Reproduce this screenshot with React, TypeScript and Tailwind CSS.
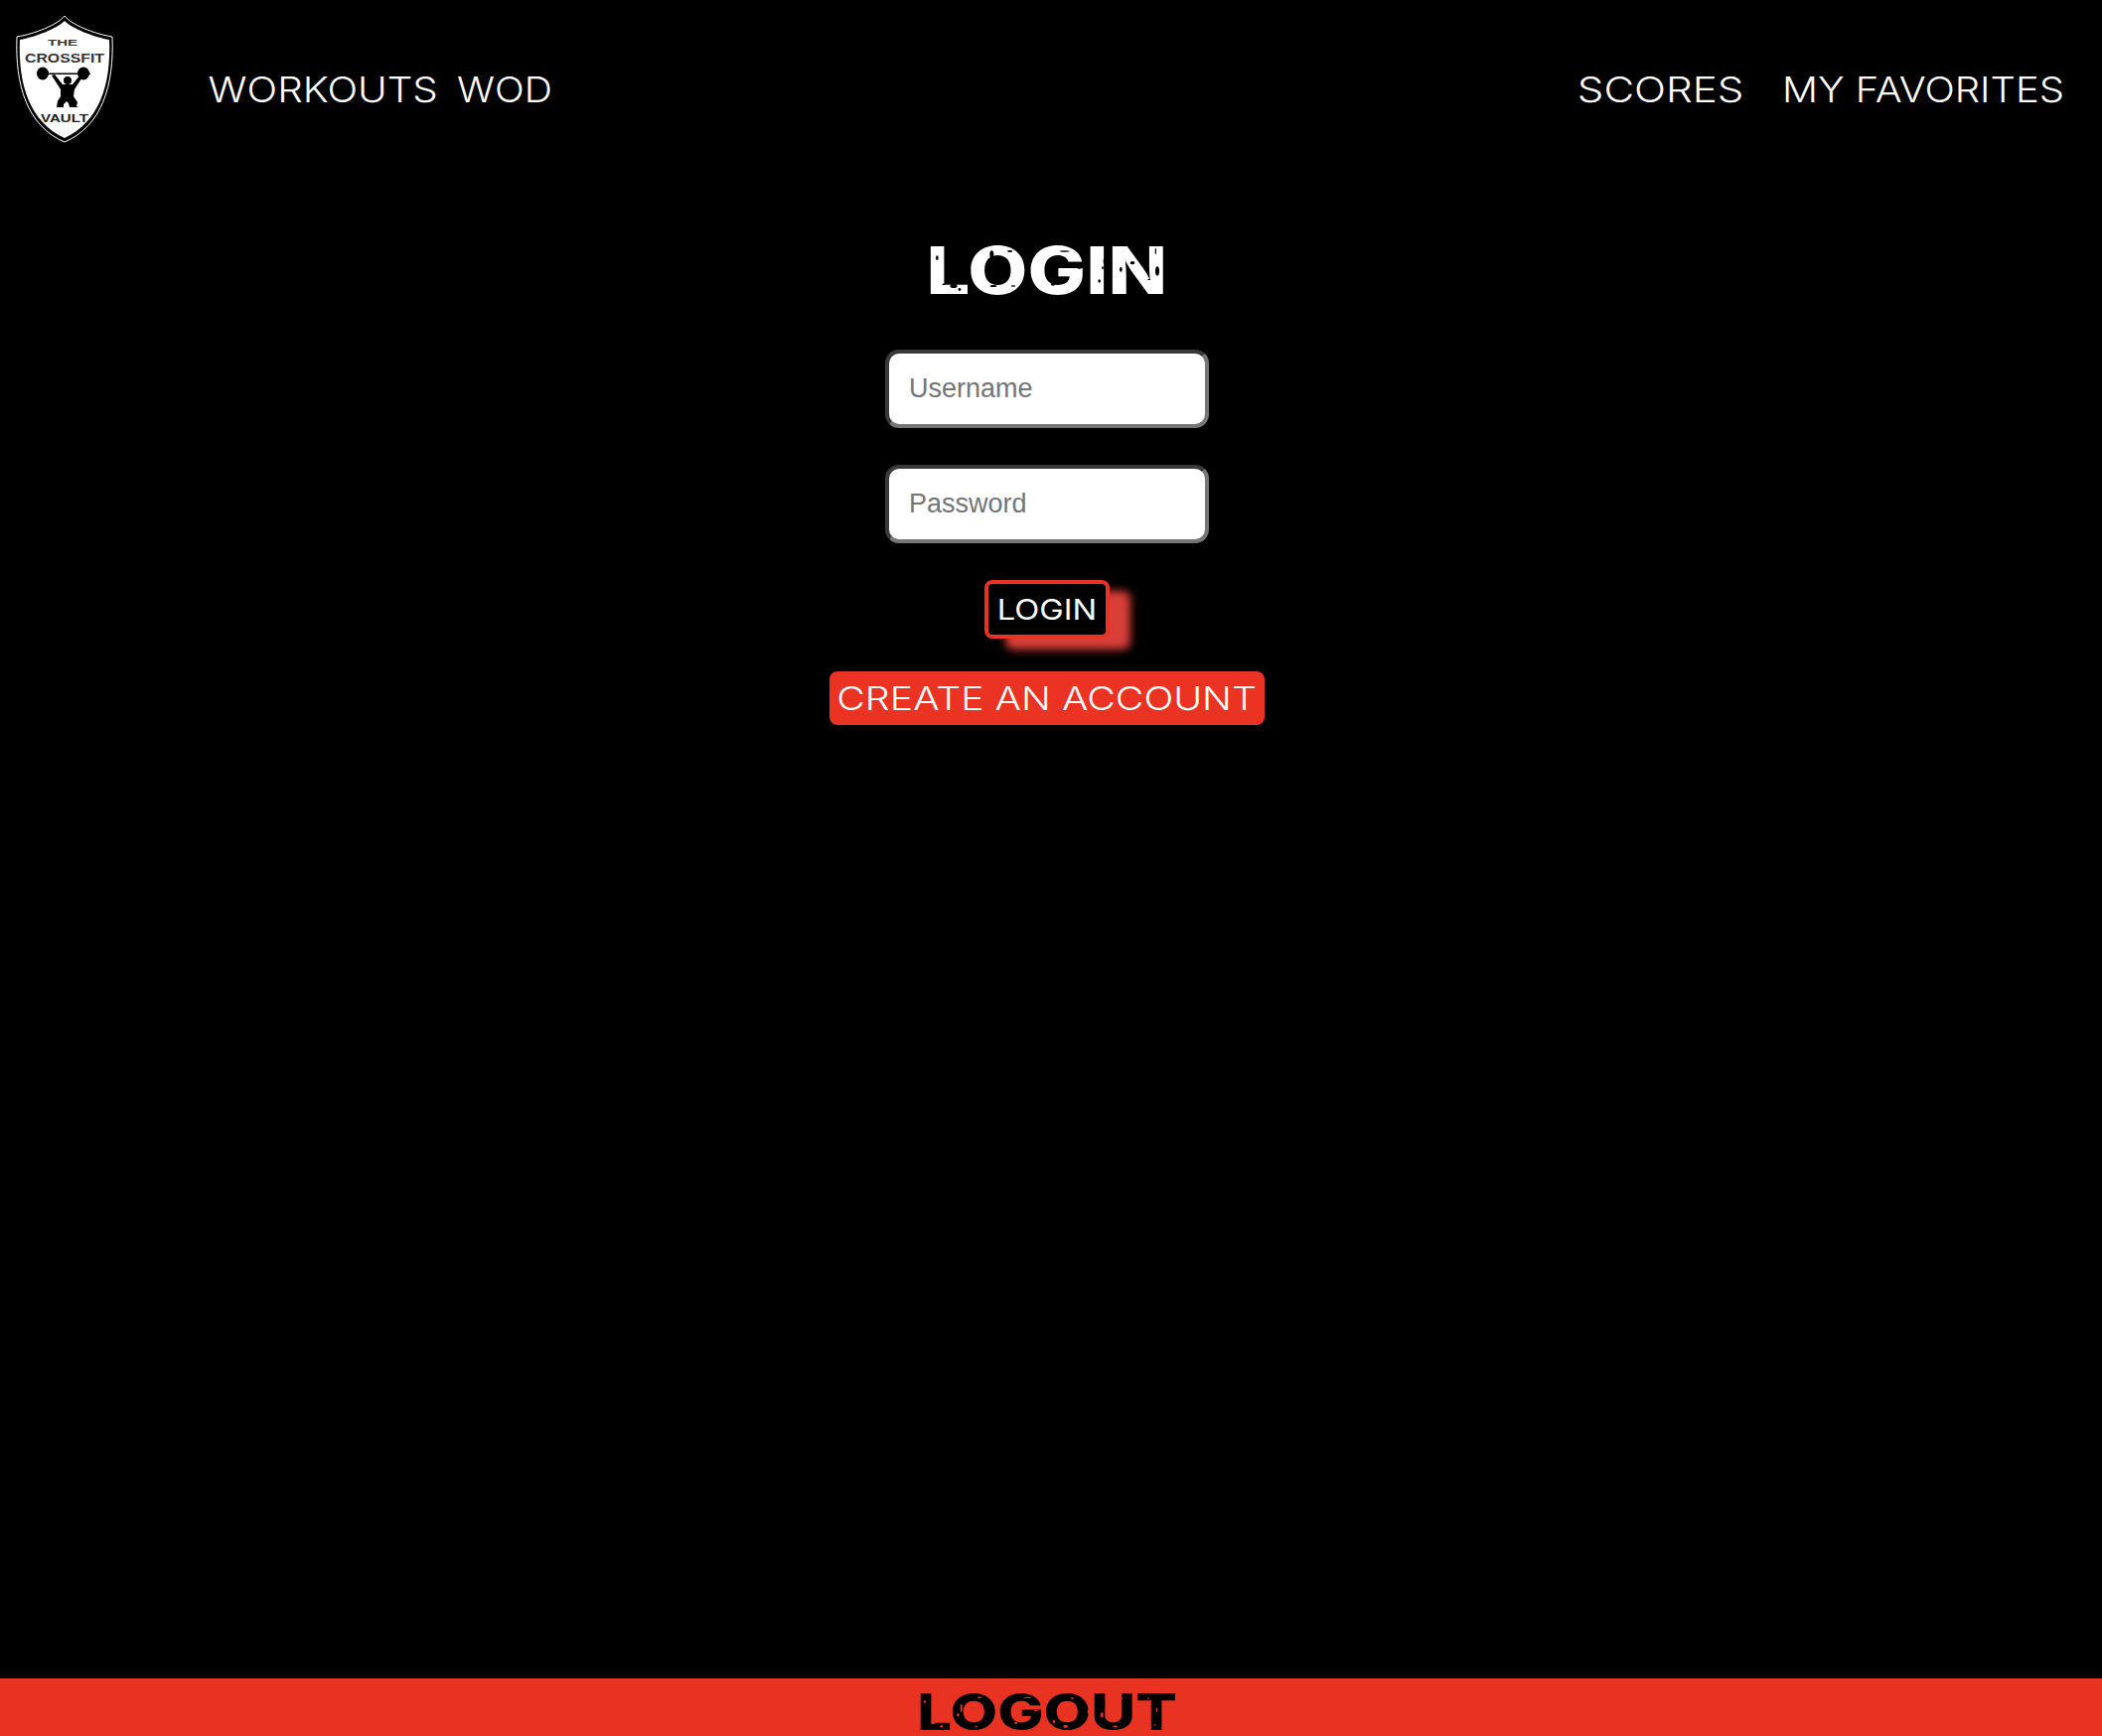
import React from "react";

function NavLink({ label, width, scale }: { label: string; width: string; scale: string }) {
  return (
    <a className={`${width} flex justify-center whitespace-nowrap text-white text-[36px] leading-[40px] font-[260] [font-family:'Inter',sans-serif]`}>
      <span className={`inline-block ${scale}`}>{label}</span>
    </a>
  );
}

function Logo() {
  return (
    <svg viewBox="0 0 130 150" className="w-[130px] h-[150px] shrink-0 self-start">
      <path d="M65 16 C72 25 95 34 113 37 C115 85 103 127 65 143 C27 127 15 85 17 37 C35 34 58 25 65 16 Z" fill="#000" stroke="#fff" strokeWidth="1" />
      <path d="M65 21 C73 29 94 37 110 40 C112 85 100 123 65 139 C30 123 18 85 20 40 C36 37 57 29 65 21 Z" fill="#fff" />
      <text x="48" y="46" fontSize="9.5" fontWeight="700" textLength="30" lengthAdjust="spacingAndGlyphs" fontFamily="Liberation Sans, sans-serif" fill="#333">THE</text>
      <text x="25" y="63" fontSize="12" fontWeight="700" textLength="80" lengthAdjust="spacingAndGlyphs" fontFamily="Liberation Sans, sans-serif" fill="#333">CROSSFIT</text>
      <text x="41" y="123" fontSize="11.5" fontWeight="700" textLength="48" lengthAdjust="spacingAndGlyphs" fontFamily="Liberation Sans, sans-serif" fill="#222">VAULT</text>
      <rect x="37" y="73.5" width="54" height="1.5" fill="#000" />
      <ellipse cx="43" cy="74" rx="6" ry="6.5" fill="#000" />
      <ellipse cx="84" cy="74" rx="6" ry="6.5" fill="#000" />
      <circle cx="68" cy="81" r="4" fill="#000" />
      <path d="M52 76 L55 75 L63 85 L73 85 L81 75 L84 76 L75 90 L74 97 L78 103 L77 107 L79 108 L70 108 L69 104 L67 102 L64 105 L64 108 L57 108 L58 102 L61 97 L61 90 Z" fill="#000" />
    </svg>
  );
}

type Sp = [number, number, number, number];
const loginSpecks: Sp[] = [
  [370,120,8,14],[420,205,22,12],[390,200,10,5],[438,215,8,10],[535,110,12,24],[520,150,8,30],[590,100,16,6],[540,205,20,6],[600,205,14,4],[755,100,30,5],[800,150,14,6],[720,200,14,8],[810,190,6,8],[875,130,6,20],[860,190,8,10],[870,150,5,10],[925,155,8,16],[960,135,14,10],[1035,160,12,28],[1010,185,10,4],[1030,100,4,20],
];
const logoutSpecks: Sp[] = [
  [155,130,6,10],[180,195,14,6],[205,205,8,8],[320,118,14,5],[265,150,6,25],[255,170,8,10],[310,205,10,4],[465,118,24,4],[490,158,12,4],[430,195,10,6],[600,120,12,5],[650,160,8,16],[545,190,8,10],[580,205,14,10],[690,170,8,16],[730,205,16,5],[750,120,6,4],[855,155,4,14],[830,120,6,4],[850,200,4,6],
];

function Specks({ items, ox, oy, color, w, h }: { items: Sp[]; ox: number; oy: number; color: string; w: number; h: number }) {
  return (
    <svg viewBox={`0 0 ${w} ${h}`} className="absolute inset-0 w-full h-full" aria-hidden="true">
      {items.map(([x, y, a, b], i) => (
        <ellipse key={i} cx={(x - ox) / 3} cy={(y - oy) / 3} rx={a / 6} ry={b / 6} fill={color} />
      ))}
    </svg>
  );
}

export default function App() {
  return (
    <div className="h-screen bg-black flex flex-col overflow-hidden">
      <header className="flex items-center h-[180px] pr-[39px]">
        <Logo />
        <nav className="flex items-center ml-[80px] gap-[21px]">
          <NavLink label="WORKOUTS" width="w-[230px]" scale="scale-x-[1.12]" />
          <NavLink label="WOD" width="w-[94px]" scale="scale-x-[1.09]" />
        </nav>
        <nav className="flex items-center ml-auto gap-[40px]">
          <NavLink label="SCORES" width="w-[166px]" scale="scale-x-[1.17]" />
          <NavLink label="MY FAVORITES" width="w-[282px]" scale="scale-x-[1.11]" />
        </nav>
      </header>

      <main className="flex flex-col items-center pr-[8px] pt-[68px]">
        <h1 className="relative w-[236px] h-[48px] flex justify-center items-center whitespace-nowrap text-white text-[66px] leading-[48px] font-extrabold [font-family:'Inter',sans-serif]">
          <span className="inline-block scale-x-[1.18]">LOGIN</span>
          <Specks items={loginSpecks} ox={348} oy={85} color="#000" w={236} h={48} />
        </h1>
        <input
          placeholder="Username"
          className="mt-[56px] w-[326px] h-[79px] box-border bg-white rounded-[14px] border-4 border-t-[#3a3a3a] border-l-[#3a3a3a] border-r-[#767676] border-b-[#767676] pl-[20px] pb-[1px] text-[27px] text-black placeholder:text-[#757575] [font-family:'Liberation_Sans',sans-serif]"
        />
        <input
          placeholder="Password"
          className="mt-[37px] w-[326px] h-[79px] box-border bg-white rounded-[14px] border-4 border-t-[#3a3a3a] border-l-[#3a3a3a] border-r-[#767676] border-b-[#767676] pl-[20px] pb-[1px] text-[27px] text-black placeholder:text-[#757575] [font-family:'Liberation_Sans',sans-serif]"
        />
        <button className="mt-[37px] w-[126px] h-[59px] box-border bg-black border-4 border-[#e93323] rounded-[8px] flex items-center justify-center shadow-[21px_11px_8px_#d93f38] text-white text-[28px] leading-none font-normal whitespace-nowrap [font-family:'Inter',sans-serif]">
          <span className="inline-block scale-x-[1.17]">LOGIN</span>
        </button>
        <button className="mt-[33px] w-[438px] h-[54px] bg-[#ea3323] rounded-[8px] flex items-center justify-center text-white text-[33px] leading-none font-[260] whitespace-nowrap [font-family:'Inter',sans-serif]">
          <span className="inline-block scale-x-[1.19]">CREATE AN ACCOUNT</span>
        </button>
      </main>

      <footer className="mt-auto h-[58px] bg-[#e83323] flex justify-center pr-[8px] pt-[15px]">
        <span className="relative w-[256px] h-[37px] flex justify-center items-center whitespace-nowrap text-black text-[51px] leading-[37px] font-extrabold [font-family:'Inter',sans-serif]">
          <span className="inline-block scale-x-[1.21]">LOGOUT</span>
          <Specks items={logoutSpecks} ox={140} oy={105} color="#e83323" w={256} h={37} />
        </span>
      </footer>
    </div>
  );
}
